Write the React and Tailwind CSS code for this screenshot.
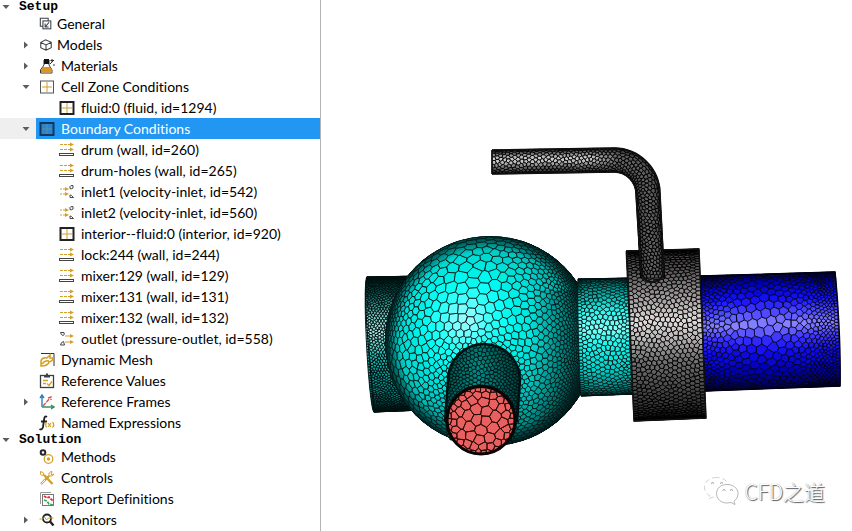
import { useState } from "react";

/* ---------- mesh generation ---------- */

function makeRandom(seed) {
  let s = seed;
  return () => {
    s = (s + 0x6d2b79f5) | 0;
    let t = Math.imul(s ^ (s >>> 15), 1 | s);
    t = (t + Math.imul(t ^ (t >>> 7), 61 | t)) ^ t;
    return ((t ^ (t >>> 14)) >>> 0) / 4294967296;
  };
}

function buildBuckets(points, step) {
  const map = new Map();
  points.forEach((p, i) => {
    const key = Math.floor(p[0] / step) * 4096 + Math.floor(p[1] / step);
    if (!map.has(key)) map.set(key, []);
    map.get(key).push(i);
  });
  return map;
}

function nearby(map, step, x, y, r) {
  const out = [];
  for (let i = Math.floor((x - r) / step); i <= Math.floor((x + r) / step); i++)
    for (let j = Math.floor((y - r) / step); j <= Math.floor((y + r) / step); j++) {
      const cell = map.get(i * 4096 + j);
      if (cell) out.push(...cell);
    }
  return out;
}

function clipByBisector(poly, a, b) {
  const mx = (a[0] + b[0]) / 2;
  const my = (a[1] + b[1]) / 2;
  const nx = b[0] - a[0];
  const ny = b[1] - a[1];
  const out = [];
  for (let i = 0; i < poly.length; i++) {
    const p = poly[i];
    const q = poly[(i + 1) % poly.length];
    const dp = (p[0] - mx) * nx + (p[1] - my) * ny;
    const dq = (q[0] - mx) * nx + (q[1] - my) * ny;
    if (dp <= 0) out.push(p);
    if (dp <= 0 !== dq <= 0) {
      const t = dp / (dp - dq);
      out.push([p[0] + (q[0] - p[0]) * t, p[1] + (q[1] - p[1]) * t]);
    }
  }
  return out;
}

/* Centroid of a cell, weighted so that fine regions keep their points. */
function weightedCentre(p, cell, size) {
  let total = 0;
  let cx = 0;
  let cy = 0;
  for (let k = 0; k < cell.length; k++) {
    const m = cell[k];
    const n = cell[(k + 1) % cell.length];
    const x = (p[0] + m[0] + n[0]) / 3;
    const y = (p[1] + m[1] + n[1]) / 3;
    const area = Math.abs((m[0] - p[0]) * (n[1] - p[1]) - (n[0] - p[0]) * (m[1] - p[1]));
    const w = area / Math.pow(size(x, y), 4);
    total += w;
    cx += x * w;
    cy += y * w;
  }
  return total > 0 ? [cx / total, cy / total] : p;
}

const PASSES = 40;

function polygons(box, inside, size, seed) {
  const [x0, y0, x1, y1] = box;
  const rnd = makeRandom(seed);
  const step = 6;
  let pts = [];
  const map = new Map();
  let misses = 0;
  while (misses < 1500) {
    const x = x0 + rnd() * (x1 - x0);
    const y = y0 + rnd() * (y1 - y0);
    if (!inside(x, y)) {
      misses += 0.1;
      continue;
    }
    const r = size(x, y) * 0.84;
    const clash = nearby(map, step, x, y, r).some((i) => Math.hypot(pts[i][0] - x, pts[i][1] - y) < r);
    if (clash) {
      misses++;
      continue;
    }
    misses = 0;
    const key = Math.floor(x / step) * 4096 + Math.floor(y / step);
    if (!map.has(key)) map.set(key, []);
    map.get(key).push(pts.length);
    pts.push([x, y]);
  }
  let cells = [];
  for (let pass = 0; pass <= PASSES; pass++) {
    const grid = buildBuckets(pts, step);
    cells = pts.map((p, i) => {
      const s = size(p[0], p[1]) * 1.2;
      const l = Math.max(x0, p[0] - s);
      const r = Math.min(x1, p[0] + s);
      const t = Math.max(y0, p[1] - s);
      const b = Math.min(y1, p[1] + s);
      let poly = [[l, t], [r, t], [r, b], [l, b]];
      nearby(grid, step, p[0], p[1], s * 1.8).forEach((j) => {
        if (j !== i && poly.length) poly = clipByBisector(poly, p, pts[j]);
      });
      return poly;
    });
    if (pass < PASSES) pts = pts.map((p, i) => weightedCentre(p, cells[i], size));
  }
  return cells.map((c, i) => [pts[i], c]);
}

function ramp(stops, t) {
  let k = 0;
  while (k < stops.length - 2 && t > stops[k + 1][0]) k++;
  const [a, ca] = stops[k];
  const [b, cb] = stops[k + 1];
  const f = Math.min(1, Math.max(0, (t - a) / (b - a)));
  return ca.map((v, i) => v + (cb[i] - v) * f);
}

function mesh({ box, inside = () => true, size, seed, project, shade }) {
  const groups = new Map();
  polygons(box, inside, size, seed).forEach(([p, cell]) => {
    if (cell.length < 3) return;
    const color = "rgb(" + shade(p[0], p[1]).map((v) => Math.min(255, Math.max(0, Math.round(v / 8) * 8))).join(",") + ")";
    const d = "M" + cell.map((v) => project(v[0], v[1]).map((n) => n.toFixed(1)).join(" ")).join("L") + "Z";
    groups.set(color, (groups.get(color) || "") + d);
  });
  return [...groups];
}

const HALF = Math.PI / 2;
const mix = (a, b, t) => a + (b - a) * t;

/* A cylinder seen from the side, spanned by its four silhouette corners. */
function cylinder({ tl, tr, bl, br, bulge, size, seed, stops }) {
  const len = tr[0] - tl[0];
  const rad = (bl[1] - tl[1]) / 2;
  return mesh({
    box: [0, -HALF * rad, len, HALF * rad],
    size,
    seed,
    project: (s, t) => {
      const u = s / len;
      const v = (1 + Math.sin(t / rad)) / 2;
      const x = mix(mix(tl[0], tr[0], u), mix(bl[0], br[0], u), v) + bulge * Math.cos(t / rad);
      const y = mix(mix(tl[1], tr[1], u), mix(bl[1], br[1], u), v);
      return [x, y];
    },
    shade: (s, t) => ramp(stops, (1 + Math.sin(t / rad)) / 2),
  });
}

const R = 105;
const CX = 490;
const CY = 341;

function domePoint(a, b) {
  const r = Math.hypot(a, b);
  const k = r < 0.01 ? 1 : (R * Math.sin(Math.min(HALF, r / R))) / r;
  return [CX + a * k, CY + b * k];
}

const dome = mesh({
  box: [-HALF * R, -HALF * R, HALF * R, HALF * R],
  inside: (a, b) => {
    const [x] = domePoint(a, b);
    return Math.hypot(a, b) < HALF * R && x < 590;
  },
  size: (a, b) => {
    const [x, y] = domePoint(a, b);
    const nozzle = 5 + 0.13 * Math.max(0, Math.hypot(x - 484, y - 385) - 42);
    const right = 3.2 + Math.max(0, 576 - x) * 0.1;
    const left = 4.6 + Math.max(0, x - 386) * 0.12 + Math.max(0, y - 320) * 0.12;
    return Math.min(14, nozzle, right, left);
  },
  seed: 11,
  project: domePoint,
  shade: (a, b) => {
    const [x, y] = domePoint(a, b);
    const nx = (x - CX) / R;
    const ny = (y - CY) / R;
    const nz = Math.sqrt(Math.max(0, 1 - nx * nx - ny * ny));
    const l = Math.max(0, -0.24 * nx - 0.2 * ny + 0.95 * nz);
    const base = 0.34 + 0.7 * l;
    const glow = Math.pow(l, 34) * 150;
    return [glow, 255 * base, 246 * base];
  },
});

const leftPipe = cylinder({
  tl: [367, 277], tr: [420, 276], bl: [374, 412], br: [425, 410], bulge: -4,
  size: () => 2.8, seed: 5,
  stops: [[0, [0, 50, 48]], [0.12, [0, 90, 86]], [0.3, [120, 205, 198]], [0.42, [170, 230, 222]], [0.6, [20, 180, 172]], [0.8, [0, 140, 134]], [1, [0, 80, 76]]],
});

const neck = cylinder({
  tl: [578, 279], tr: [632, 278], bl: [581, 396], br: [636, 394], bulge: -1,
  size: (s) => 3.2 + Math.min(1.6, s * 0.15, Math.max(0, 52 - s) * 0.1), seed: 8,
  stops: [[0, [0, 90, 86]], [0.1, [0, 150, 144]], [0.28, [40, 245, 236]], [0.42, [130, 255, 250]], [0.56, [30, 250, 240]], [0.78, [0, 205, 196]], [1, [0, 110, 105]]],
});

const outletPipe = cylinder({
  tl: [700, 276], tr: [835, 272], bl: [704, 391], br: [840, 386], bulge: 1,
  size: (s, t) => Math.max(3.2, 10.5 - Math.hypot((s - 60) * 0.12, t * 0.05)), seed: 21,
  stops: [[0, [0, 0, 110]], [0.08, [0, 0, 180]], [0.22, [20, 16, 245]], [0.34, [80, 75, 255]], [0.44, [135, 130, 255]], [0.56, [60, 50, 255]], [0.68, [15, 10, 235]], [0.85, [0, 0, 170]], [1, [0, 0, 70]]],
});

const collar = cylinder({
  tl: [626, 251], tr: [699, 249], bl: [634, 421], br: [706, 418], bulge: 0,
  size: () => 4.6, seed: 31,
  stops: [[0, [60, 60, 60]], [0.12, [85, 83, 83]], [0.28, [160, 155, 155]], [0.42, [225, 220, 220]], [0.52, [185, 182, 182]], [0.64, [115, 115, 115]], [0.8, [75, 75, 75]], [1, [30, 30, 30]]],
});

/* Bent feed tube: straight run, quarter turn, straight drop. */
const RUN = 122;
const TURN = 34;
const ARC = HALF * TURN;
const tube = mesh({
  box: [0, -HALF * 12, RUN + ARC + 84, HALF * 12],
  size: () => 3.6,
  seed: 44,
  project: (s, t) => {
    const o = 12 * Math.sin(t / 12);
    if (s < RUN) return [492 + s, 162 - s * 0.016 + o];
    if (s < RUN + ARC) {
      const a = (s - RUN) / TURN;
      return [614 + (TURN - o) * Math.sin(a), 194 - (TURN - o) * Math.cos(a)];
    }
    const d = s - RUN - ARC;
    return [648 - o + d * 0.055, 194 + d];
  },
  shade: (s, t) => {
    const straight = Math.max(0, Math.min(1, (RUN + 6 - s) / 30));
    const c = Math.cos(t / 12);
    const hot = Math.pow(Math.max(0, Math.cos((t + 2) / 12)), 7);
    const v = 25 + 70 * c + straight * 110 * hot;
    return [v, v, v];
  },
});

const nozzle = mesh({
  box: [444, 340, 522, 440],
  inside: () => true,
  size: (x) => 3 + Math.max(0, 1.2 - Math.abs(x - 480) * 0.05),
  seed: 52,
  project: (x, y) => [x, y],
  shade: (x, y) => {
    const k = 1 - Math.min(1, Math.abs(x - 478) / 46);
    const f = 55 + 85 * k - Math.max(0, 365 - y);
    return [0, f, f * 0.96];
  },
});

const face = mesh({
  box: [447, 387, 515, 455],
  inside: (x, y) => Math.hypot(x - 481, y - 421) < 34,
  size: (x, y) => 3 + Math.min(6, Math.max(0, 34 - Math.hypot(x - 481, y - 421)) * 0.4),
  seed: 63,
  project: (x, y) => [x, y],
  shade: () => [230, 92, 98],
});

function Surface({ cells, line = "#001010", width = 0.8, clip }) {
  return (
    <g stroke={line} strokeWidth={width} strokeLinejoin="round" clipPath={clip}>
      {cells.map(([fill, d]) => (
        <path key={fill} fill={fill} d={d} />
      ))}
    </g>
  );
}

function MeshView() {
  return (
    <svg viewBox="321 0 531 531" className="block w-full h-auto" role="img" aria-label="Polyhedral surface mesh of a mixer">
      <defs>
        <clipPath id="dome"><circle cx={CX} cy={CY} r="105" /></clipPath>
        <clipPath id="nozzle"><path d="M448 380A36 36 0 0 1 520 380L517 422A36 36 0 0 1 445 422Z" /></clipPath>
        <clipPath id="face"><circle cx="481" cy="421" r="33" /></clipPath>
        <clipPath id="tube"><path d="M480 140H680V274Q652 290 630 274V210H480Z" /></clipPath>
        <radialGradient id="rim">
          <stop offset="0.86" stopColor="#001c1c" stopOpacity="0" />
          <stop offset="1" stopColor="#001c1c" stopOpacity="0.75" />
        </radialGradient>
        <linearGradient id="side">
          <stop offset="0" stopColor="#001c1c" stopOpacity="0" />
          <stop offset="1" stopColor="#001c1c" stopOpacity="0.5" />
        </linearGradient>
      </defs>
      <Surface cells={leftPipe} width={0.9} />
      <path d="M367 277C363 300 369 350 374 412L409 410" fill="none" stroke="#001010" />
      <Surface cells={dome} width={0.8} clip="url(#dome)" />
      <circle cx={CX} cy={CY} r="105" fill="url(#rim)" />
      <path d="M530 290H580V396L530 435Z" fill="url(#side)" />
      <Surface cells={neck} />
      <path d="M578 279L632 278M581 396L636 394" stroke="#001010" />
      <Surface cells={outletPipe} line="#000018" width={0.8} />
      <path d="M701 276L835 272C838 300 841 350 840 386L704 391Z" fill="none" stroke="#00001c" strokeWidth="1.4" />
      <Surface cells={collar} line="#000" width={0.9} />
      <path d="M627 251L699 249L706 418L634 421Z" fill="none" stroke="#111" strokeWidth="1.4" />
      <g clipPath="url(#tube)">
        <Surface cells={tube} line="#000" width={0.9} />
        <path d="M492 150L614 148A46 46 0 0 1 660 194L664 272M492 174L614 172A22 22 0 0 1 636 194L641 272M492 150V174" fill="none" stroke="#111" strokeWidth="1.6" />
      </g>
      <path d="M641 270Q643 282 652 282Q663 282 664 270" fill="none" stroke="#111" strokeWidth="2" />
      <Surface cells={nozzle} width={0.8} clip="url(#nozzle)" />
      <path d="M445 422L448 380A36 36 0 0 1 520 380L517 422" fill="none" stroke="#001010" strokeWidth="2.5" />
      <circle cx="481" cy="420" r="35" fill="#0a0606" />
      <Surface cells={face} line="#2a0c08" width={1} clip="url(#face)" />
      <circle cx="481" cy="420" r="34" fill="none" stroke="#0a0606" strokeWidth="3" />
    </svg>
  );
}

/* ---------- tree icons ---------- */

const GOLD = "#d3a029";
const INK = "#3c3f46";

function Icon({ children, size = "size-4" }) {
  return (
    <svg viewBox="0 0 16 16" fill="none" className={`${size} shrink-0`} aria-hidden="true">
      {children}
    </svg>
  );
}

function GridIcon({ frame = "#222", weight = 2, fill = "#fff", line = GOLD }) {
  return (
    <Icon>
      <rect x="1.500" y="2" width="13" height="12" fill={fill} stroke={frame} strokeWidth={weight} />
      <path d="M8 3v10M3 8h10" stroke={line} />
    </Icon>
  );
}

const icons = {
  general: (
    <Icon size="size-3.5">
      <path d="M4.500 10.500H1.500V1.500H10.500V4.500" stroke={INK} strokeWidth="1.200" />
      <rect x="4.500" y="4.500" width="9" height="9" stroke={INK} strokeWidth="1.200" />
      <path d="M11.500 6L7 11.500M7 7.500V11.500H11" stroke={INK} strokeWidth="1.200" />
    </Icon>
  ),
  models: (
    <Icon size="size-3.5">
      <path d="M2 5L7.500 2L14 5V11L8 14L2 11ZM2 5L8 8L14 5M8 8V14" stroke={INK} strokeWidth="1.200" />
    </Icon>
  ),
  materials: (
    <Icon>
      <path d="M5 2h5v5l3 5v3H1.500v-3L5 7Z" fill="#fff" stroke="#333" />
      <path d="M4 9h7l2 3v2.500H2V12Z" fill="#dc9722" />
      <path d="M5 1h5v5H5Z" fill="#111" />
      <path d="M11 6l4-4M13 1v3M11.500 2.500h3M14 7h2" stroke="#333" />
    </Icon>
  ),
  zone: <GridIcon frame="#555" weight={1} />,
  cell: <GridIcon />,
  boundary: <GridIcon frame="#12395c" fill="#2b86d0" line="#5c8f9d" />,
  wall: (
    <Icon>
      <path d="M1 2.500h10M1 7.500h10" stroke={GOLD} strokeDasharray="3 1" />
      <path d="M11 0.500l4 2l-4 2zM11 5.500l4 2l-4 2z" fill={GOLD} />
      <rect x="0.500" y="11.500" width="14" height="2" fill="#fff" stroke="#444" />
    </Icon>
  ),
  inlet: (
    <Icon>
      <path d="M1 5h6M1 10h6" stroke={GOLD} strokeDasharray="2 1" />
      <path d="M6 3l4 2l-4 2zM6 8l4 2l-4 2z" fill={GOLD} />
      <path d="M11 2.500Q11 1.500 14 1.500V4Q12 5.500 11 4.500ZM11 11Q12 10.500 14.500 13.500H11Z" stroke="#444" />
    </Icon>
  ),
  outlet: (
    <Icon>
      <path d="M6 5h6M6 11h6" stroke={GOLD} />
      <path d="M11 3l4 2l-4 2zM11 9l4 2l-4 2z" fill={GOLD} />
      <path d="M1.500 1.500H5Q6 4 4 4.500Q2 4 1.500 1.500ZM1.500 14Q2 11 4.500 10.500L5.500 14Z" stroke="#444" />
    </Icon>
  ),
  dynamic: (
    <Icon>
      <path d="M2 1.500h13V14" stroke="#333" />
      <path d="M2 14V9Q3 5 8 6L11 3V6H14Q14 9 10 10Q9 14 2 14ZM3 12Q6 8 10 9" stroke={GOLD} strokeWidth="1.500" />
    </Icon>
  ),
  values: (
    <Icon>
      <rect x="1.500" y="2.500" width="13" height="12" stroke={INK} strokeWidth="1.300" />
      <path d="M5 4.500V2h2V0.500h2V2h2v2.500Z" fill={INK} />
      <path d="M4 7.500h5M4 10.500h3M8 10.500l2 2l3-4" stroke={GOLD} strokeWidth="1.300" />
    </Icon>
  ),
  frames: (
    <Icon>
      <path d="M3 13V2M1 4l2-3l2 3" stroke="#2b7fc4" strokeWidth="1.400" />
      <path d="M3 13h11M12 11l3 2l-3 2" stroke="#3d8d5c" strokeWidth="1.400" />
      <path d="M4 12l7-8M9 4l3-1v3" stroke="#e25151" strokeWidth="1.400" strokeDasharray="4 1" />
    </Icon>
  ),
  fx: (
    <Icon>
      <path d="M8 2Q5.500 0 5 5L4 12Q3 15.500 0.500 14M2 6.500h6" stroke="#222" strokeWidth="1.800" />
      <path d="M7.500 7Q6 10 7.500 12.500M9 8l3 4M12 8l-3 4M13.500 7Q16 10 13.500 12.500" stroke={GOLD} strokeWidth="1.200" />
    </Icon>
  ),
  methods: (
    <Icon>
      <circle cx="4" cy="3.500" r="2.300" stroke="#23262e" strokeWidth="2" />
      <circle cx="9.500" cy="10" r="4.300" stroke={GOLD} strokeWidth="1.300" />
      <circle cx="9.500" cy="10" r="1.700" fill={GOLD} />
    </Icon>
  ),
  controls: (
    <Icon>
      <path d="M2 14L10 6M13.500 14L5 5" stroke={GOLD} strokeWidth="2.400" />
      <path d="M10 6Q9 2 13 1.500L12 4L13 5L15 4Q14 7 10 6ZM5 5Q5 2 1.500 1.500V4Q2 6 5 5Z" stroke={GOLD} />
      <path d="M2.500 13.500L6 10" stroke="#fff" />
    </Icon>
  ),
  report: (
    <Icon>
      <path d="M1.500 13V1.500H12" stroke="#999" />
      <rect x="3.500" y="3.500" width="11" height="11" fill="#fff" stroke="#777" />
      <path d="M5 5l3 2l2-1l4 4" stroke="#d92c37" strokeWidth="1.700" strokeDasharray="3 1" />
      <path d="M5 9l3 1l2 3l4 1" stroke="#3fa05b" strokeWidth="1.700" strokeDasharray="3 1" />
    </Icon>
  ),
  monitors: (
    <Icon>
      <circle cx="8" cy="6.500" r="4" stroke="#222" strokeWidth="1.800" />
      <path d="M11 9.500l3.500 4" stroke="#222" strokeWidth="2.400" />
      <path d="M0.500 7h3l2-2l2 3l2-2h5" stroke={GOLD} />
    </Icon>
  ),
};

/* ---------- outline tree ---------- */

const tree = [
  {
    label: "Setup",
    items: [
      { label: "General", icon: "general", small: true },
      { label: "Models", icon: "models", small: true, closed: true },
      { label: "Materials", icon: "materials", closed: true },
      { label: "Cell Zone Conditions", icon: "zone", items: [{ label: "fluid:0 (fluid, id=1294)", icon: "cell" }] },
      {
        label: "Boundary Conditions",
        icon: "boundary",
        items: [
          { label: "drum (wall, id=260)", icon: "wall" },
          { label: "drum-holes (wall, id=265)", icon: "wall" },
          { label: "inlet1 (velocity-inlet, id=542)", icon: "inlet" },
          { label: "inlet2 (velocity-inlet, id=560)", icon: "inlet" },
          { label: "interior--fluid:0 (interior, id=920)", icon: "cell" },
          { label: "lock:244 (wall, id=244)", icon: "wall" },
          { label: "mixer:129 (wall, id=129)", icon: "wall" },
          { label: "mixer:131 (wall, id=131)", icon: "wall" },
          { label: "mixer:132 (wall, id=132)", icon: "wall" },
          { label: "outlet (pressure-outlet, id=558)", icon: "outlet" },
        ],
      },
      { label: "Dynamic Mesh", icon: "dynamic" },
      { label: "Reference Values", icon: "values" },
      { label: "Reference Frames", icon: "frames", closed: true },
      { label: "Named Expressions", icon: "fx" },
    ],
  },
  {
    label: "Solution",
    items: [
      { label: "Methods", icon: "methods" },
      { label: "Controls", icon: "controls" },
      { label: "Report Definitions", icon: "report" },
      { label: "Monitors", icon: "monitors", closed: true },
    ],
  },
];

function Arrow({ open }) {
  return (
    <svg viewBox="0 0 8 8" className="size-2" fill="#5c5c5c" aria-hidden="true">
      <path d={open ? "M0.500 2H7.500L4 6Z" : "M2 0.500V7.500L6 4Z"} />
    </svg>
  );
}

function Row({ item, depth, selected, onSelect }) {
  const [open, setOpen] = useState(!item.closed);
  const active = selected === item.label;
  const expandable = item.items || item.closed;
  return (
    <li>
      <div className={`flex h-[21px] ${active ? "bg-[#efefef]" : ""}`}>
        <div className={`flex shrink-0 items-center justify-end ${depth === 1 ? "w-9 pr-1.5" : "w-14"}`}>
          {expandable && (
            <button type="button" aria-label={`Toggle ${item.label}`} onClick={() => setOpen(!open)}>
              <Arrow open={open && !item.closed} />
            </button>
          )}
        </div>
        <button
          type="button"
          onClick={() => onSelect(item.label)}
          className={`flex min-w-0 flex-1 items-center whitespace-nowrap pl-[3px] text-left ${item.small ? "gap-1" : "gap-1.5"} ${active ? "bg-[#2196f3] text-white" : ""}`}
        >
          {icons[item.icon]}
          <span>{item.label}</span>
        </button>
      </div>
      {item.items && open && (
        <ul>
          {item.items.map((child) => (
            <Row key={child.label} item={child} depth={depth + 1} selected={selected} onSelect={onSelect} />
          ))}
        </ul>
      )}
    </li>
  );
}

function Section({ section, selected, onSelect }) {
  const [open, setOpen] = useState(true);
  return (
    <li>
      <button
        type="button"
        onClick={() => setOpen(!open)}
        className="flex h-[13px] w-full items-center gap-[9px] pl-0.5 text-left font-['Liberation_Mono',monospace] text-[13px] leading-[15px] font-bold"
      >
        <Arrow open={open} />
        <span>{section.label}</span>
      </button>
      {open && (
        <ul>
          {section.items.map((item) => (
            <Row key={item.label} item={item} depth={1} selected={selected} onSelect={onSelect} />
          ))}
        </ul>
      )}
    </li>
  );
}

function Watermark() {
  return (
    <div className="absolute right-[27px] bottom-[25px] flex items-center gap-1.5">
      <svg viewBox="0 0 36 30" className="h-[30px] w-9" fill="#fff" stroke="#8a8a8a" strokeWidth="0.6" aria-hidden="true">
        <path d="M14 1.500C6 1.500 1.500 6 1.500 11.500C1.500 15 3.500 18 6.500 19.500L5.500 23L10 21C18 23 26 18 26 11.500C26 6 21 1.500 14 1.500Z" stroke="#b5b5b5" strokeDasharray="5 3" />
        <path d="M24 8.500C17.500 8.500 13.500 12.500 13.500 17.500C13.500 23 18 27 24 27L28 26.500L32 28.500L31 25C33.500 23.500 35 21 35 17.500C35 12.500 30.500 8.500 24 8.500Z" />
        <path d="M8 7.500q2-2 3 0M17 7.500q2-2 3 0M19.500 14.500q1.500-2 3 0M27 14.500q1.500-2 3 0" fill="none" stroke="#555" />
      </svg>
      <span className="font-['Noto_Sans_CJK_SC',sans-serif] text-[21px] leading-[30px] font-light text-white [text-shadow:1px_1px_1px_#555,0_0_1px_#999]">
        CFD之道
      </span>
    </div>
  );
}

export default function App() {
  const [selected, setSelected] = useState("Boundary Conditions");
  return (
    <div className="flex min-h-screen bg-white text-black">
      <nav
        aria-label="Outline"
        className="w-[321px] shrink-0 border-r border-[#b4b4b4] font-[Lato,sans-serif] text-[14px] leading-[21px] [font-variant-ligatures:none]"
      >
        <ul>
          {tree.map((section) => (
            <Section key={section.label} section={section} selected={selected} onSelect={setSelected} />
          ))}
        </ul>
      </nav>
      <main className="relative min-w-0 flex-1">
        <MeshView />
        <Watermark />
      </main>
    </div>
  );
}
